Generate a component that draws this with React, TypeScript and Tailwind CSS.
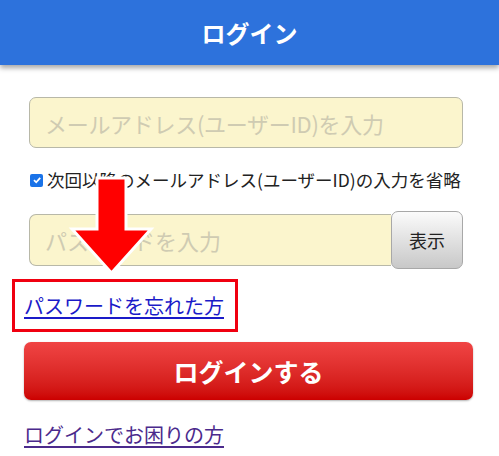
import React from "react";

export default function App() {
  const jp = { fontFamily: '"Noto Sans CJK JP", "Noto Sans", sans-serif' };
  return (
    <div className="relative w-[499px] h-[456px] bg-white overflow-hidden" style={jp}>
      <div className="h-[65px] bg-[#2d72dc] shadow-[0_3px_5px_rgba(0,0,0,0.35)] flex items-center justify-center">
        <span className="text-white font-bold text-[24px] leading-none">ログイン</span>
      </div>

      <div className="flex flex-col pl-[24px] pr-[26px]">
        <div className="mt-[32px] ml-[5px] mr-[10px] h-[51px] rounded-[7px] border border-[#b8b8a8] bg-[#fbf5cd] flex items-center pl-[15px]">
          <span className="text-[22px] text-[#cfcbb2] leading-none tracking-[-0.3px]">メールアドレス(ユーザーID)を入力</span>
        </div>

        <div className="mt-[21px] ml-[6px] flex items-center h-[22px]">
          <span className="w-[13px] h-[13px] rounded-[2px] bg-[#1a73e8] flex items-center justify-center">
            <svg width="10" height="10" viewBox="0 0 10 10">
              <path d="M2 5.2 L4.2 7.3 L8.2 2.8" stroke="white" strokeWidth="1.8" fill="none" />
            </svg>
          </span>
          <span className="ml-[4px] text-[17.5px] text-[#222] leading-none">次回以降のメールアドレス(ユーザーID)の入力を省略</span>
        </div>

        <div className="mt-[20px] ml-[5px] mr-[10px] flex items-center h-[58px]">
          <div className="flex-1 h-[52px] rounded-l-[7px] border border-r-0 border-[#b8b8a8] bg-[#fbf5cd] flex items-center pl-[15px]">
            <span className="text-[22px] text-[#cfcbb2] leading-none">パスワードを入力</span>
          </div>
          <div className="w-[72px] h-[58px] rounded-[7px] border border-[#a8a8a8] bg-gradient-to-b from-[#fbfbfb] to-[#c8c8c8] flex items-center justify-center">
            <span className="text-[18px] text-[#222] leading-none">表示</span>
          </div>
        </div>

        <div className="mt-[10px] -ml-[12px] w-[226px] h-[53px] border-[3px] border-[#f00010] flex items-center pl-[9px]">
          <span className="text-[20px] text-[#1a1ac8] underline underline-offset-[3px] leading-none">パスワードを忘れた方</span>
        </div>

        <div className="mt-[10px] h-[58px] rounded-[7px] bg-gradient-to-b from-[#f04444] to-[#cc0000] shadow-[0_1px_2px_rgba(0,0,0,0.3)] flex items-center justify-center">
          <span className="text-white font-bold text-[25px] leading-none">ログインする</span>
        </div>

        <div className="mt-[24px]">
          <span className="text-[20px] text-[#4b2a8c] underline underline-offset-[3px] leading-none">ログインでお困りの方</span>
        </div>
      </div>

      <svg className="absolute left-0 top-0" width="499" height="456" viewBox="0 0 499 456">
        <polygon
          points="97,178 126,178 126,229 151,229 111.5,273 72,229 97,229"
          fill="#ff0000"
          stroke="white"
          strokeWidth="3"
          strokeLinejoin="miter"
        />
      </svg>
    </div>
  );
}
